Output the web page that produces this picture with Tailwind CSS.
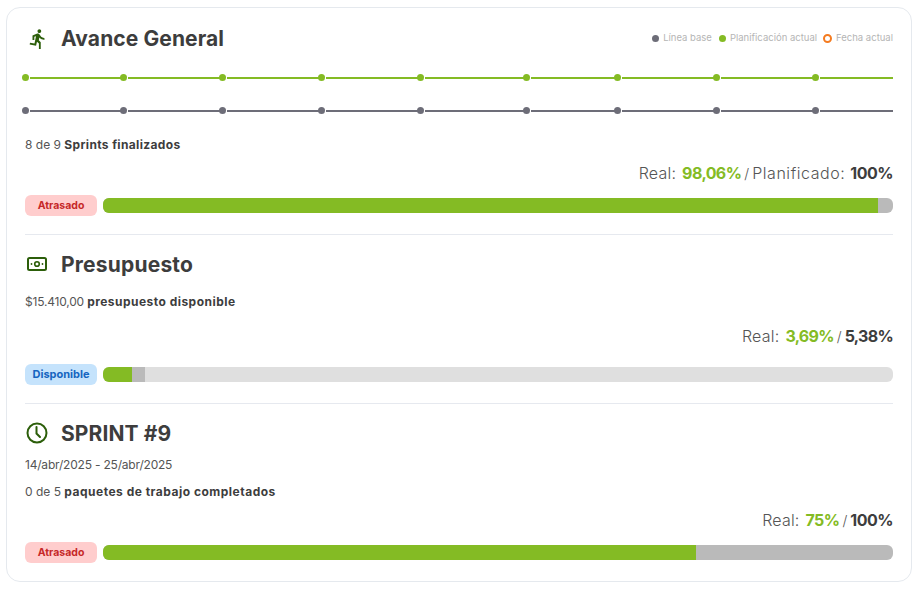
<!DOCTYPE html>
<html lang="es">
<head>
    <meta charset="UTF-8">
    <title>Avance General</title>
    <script src="https://cdn.jsdelivr.net/npm/@tailwindcss/browser@4"></script>
</head>
<body class="bg-white font-['Inter','Liberation_Sans',sans-serif] text-[#3d3d3d]">
<div class="pt-[7px] pl-[6px] pr-[4px]">
    <div class="w-[906px] h-[575px] border border-[#e5e9ee] rounded-[14px] px-[18px] bg-white">

        <!-- AVANCE GENERAL -->
        <div class="h-[60px] flex items-center justify-between pt-[1px]">
            <div class="flex items-center">
                <svg class="w-[22px] h-[22px] ml-[2px] text-[#2c5e0a]" viewBox="0 0 24 24" fill="currentColor"><path d="M13.49 5.48c1.1 0 2-.9 2-2s-.9-2-2-2-2 .9-2 2 .9 2 2 2zm-3.6 13.9l1-4.4 2.1 2v6h2v-7.5l-2.1-2 .6-3c1.3 1.5 3.3 2.5 5.5 2.5v-2c-1.9 0-3.5-1-4.3-2.4l-1-1.6c-.4-.6-1-1-1.7-1-.3 0-.5.1-.8.1l-5.2 2.2v4.7h2v-3.4l1.8-.7-1.6 8.1-4.9-1-.4 2 7 1.4z"/></svg>
                <h2 class="ml-[12px] text-[21px] font-bold leading-none tracking-[0.1px]">Avance General</h2>
            </div>
            <div class="flex items-center text-[9.5px] text-[#b5b5b5]">
                <span class="w-[7px] h-[7px] rounded-full bg-[#6d6d78] mr-[4px]"></span><span>Línea base</span>
                <span class="w-[7px] h-[7px] rounded-full bg-[#84bb24] ml-[7px] mr-[4px]"></span><span>Planificación actual</span>
                <span class="w-[9px] h-[9px] rounded-full border-2 border-[#f47b20] ml-[6px] mr-[4px]"></span><span>Fecha actual</span>
            </div>
        </div>

        <!-- TIMELINES -->
        <div class="mt-[5px] flex items-center h-[8px] text-[#84bb24]">
            <span class="w-[98px] flex items-center"><i class="w-[7px] h-[7px] rounded-full bg-current -ml-[3px] mr-[1px]"></i><i class="flex-1 h-[2px] mt-[2px] bg-current"></i></span>
            <span class="w-[99px] flex items-center"><i class="w-[7px] h-[7px] rounded-full bg-current -ml-[3px] mr-[1px]"></i><i class="flex-1 h-[2px] mt-[2px] bg-current"></i></span>
            <span class="w-[99px] flex items-center"><i class="w-[7px] h-[7px] rounded-full bg-current -ml-[3px] mr-[1px]"></i><i class="flex-1 h-[2px] mt-[2px] bg-current"></i></span>
            <span class="w-[99px] flex items-center"><i class="w-[7px] h-[7px] rounded-full bg-current -ml-[3px] mr-[1px]"></i><i class="flex-1 h-[2px] mt-[2px] bg-current"></i></span>
            <span class="w-[106px] flex items-center"><i class="w-[7px] h-[7px] rounded-full bg-current -ml-[3px] mr-[1px]"></i><i class="flex-1 h-[2px] mt-[2px] bg-current"></i></span>
            <span class="w-[91px] flex items-center"><i class="w-[7px] h-[7px] rounded-full bg-current -ml-[3px] mr-[1px]"></i><i class="flex-1 h-[2px] mt-[2px] bg-current"></i></span>
            <span class="w-[99px] flex items-center"><i class="w-[7px] h-[7px] rounded-full bg-current -ml-[3px] mr-[1px]"></i><i class="flex-1 h-[2px] mt-[2px] bg-current"></i></span>
            <span class="w-[99px] flex items-center"><i class="w-[7px] h-[7px] rounded-full bg-current -ml-[3px] mr-[1px]"></i><i class="flex-1 h-[2px] mt-[2px] bg-current"></i></span>
            <span class="flex-1 flex items-center"><i class="w-[7px] h-[7px] rounded-full bg-current -ml-[3px] mr-[1px]"></i><i class="flex-1 h-[2px] mt-[2px] bg-current"></i></span>
        </div>
        <div class="mt-[25px] flex items-center h-[8px] text-[#6d6d78]">
            <span class="w-[98px] flex items-center"><i class="w-[7px] h-[7px] rounded-full bg-current -ml-[3px] mr-[1px]"></i><i class="flex-1 h-[2px] mt-[2px] bg-current"></i></span>
            <span class="w-[99px] flex items-center"><i class="w-[7px] h-[7px] rounded-full bg-current -ml-[3px] mr-[1px]"></i><i class="flex-1 h-[2px] mt-[2px] bg-current"></i></span>
            <span class="w-[99px] flex items-center"><i class="w-[7px] h-[7px] rounded-full bg-current -ml-[3px] mr-[1px]"></i><i class="flex-1 h-[2px] mt-[2px] bg-current"></i></span>
            <span class="w-[99px] flex items-center"><i class="w-[7px] h-[7px] rounded-full bg-current -ml-[3px] mr-[1px]"></i><i class="flex-1 h-[2px] mt-[2px] bg-current"></i></span>
            <span class="w-[106px] flex items-center"><i class="w-[7px] h-[7px] rounded-full bg-current -ml-[3px] mr-[1px]"></i><i class="flex-1 h-[2px] mt-[2px] bg-current"></i></span>
            <span class="w-[91px] flex items-center"><i class="w-[7px] h-[7px] rounded-full bg-current -ml-[3px] mr-[1px]"></i><i class="flex-1 h-[2px] mt-[2px] bg-current"></i></span>
            <span class="w-[99px] flex items-center"><i class="w-[7px] h-[7px] rounded-full bg-current -ml-[3px] mr-[1px]"></i><i class="flex-1 h-[2px] mt-[2px] bg-current"></i></span>
            <span class="w-[99px] flex items-center"><i class="w-[7px] h-[7px] rounded-full bg-current -ml-[3px] mr-[1px]"></i><i class="flex-1 h-[2px] mt-[2px] bg-current"></i></span>
            <span class="flex-1 flex items-center"><i class="w-[7px] h-[7px] rounded-full bg-current -ml-[3px] mr-[1px]"></i><i class="flex-1 h-[2px] mt-[2px] bg-current"></i></span>
        </div>

        <p class="mt-[23px] h-[16px] leading-[16px] text-[12px] text-[#555]">8 de 9 <b class="font-bold text-[#3d3d3d] tracking-[0.35px]">Sprints finalizados</b></p>
        <div class="mt-[10px] h-[20px] leading-[20px] text-[16px] flex justify-end items-baseline text-[#555]">
            <span class="tracking-[0.2px] font-light">Real:</span>
            <b class="ml-[6px] font-bold text-[#84bb24] tracking-[-0.6px]">98,06%</b>
            <span class="mx-[3px] text-[14px] font-light">/</span>
            <span class="tracking-[0.55px] font-light">Planificado:</span>
            <b class="ml-[5px] font-bold text-[#3d3d3d] tracking-[-0.5px]">100%</b>
        </div>
        <div class="mt-[12px] flex items-center">
            <span class="w-[72px] h-[21px] rounded-[6px] bg-[#ffcdcd] text-[#c62828] text-[10.5px] font-bold flex items-center justify-center">Atrasado</span>
            <div class="ml-[6px] flex-1 h-[15px] rounded-[6px] bg-[#bababa] overflow-hidden"><div class="h-full bg-[#84bb24]" style="width:98.06%"></div></div>
        </div>
        <hr class="mt-[18px] border-[#e6e9ef]">

        <!-- PRESUPUESTO -->
        <div class="h-[58px] flex items-center">
            <svg class="w-[20px] h-[14px] ml-[2px] text-[#2c5e0a]" viewBox="0 0 20 14" fill="none" stroke="currentColor" stroke-width="2"><rect x="1" y="1" width="18" height="12" rx="1.5"/><circle cx="10" cy="7" r="2.3" stroke-width="1.6"/><circle cx="4.5" cy="7" r=".9" fill="currentColor" stroke="none"/><circle cx="15.5" cy="7" r=".9" fill="currentColor" stroke="none"/></svg>
            <h2 class="ml-[14px] text-[21px] font-bold leading-none tracking-[0.2px]">Presupuesto</h2>
        </div>
        <p class="mt-[1px] h-[16px] leading-[16px] text-[12px] text-[#555] tracking-[-0.2px]">$15.410,00 <b class="font-bold text-[#3d3d3d] tracking-[0.47px]">presupuesto disponible</b></p>
        <div class="mt-[16px] h-[20px] leading-[20px] text-[16px] flex justify-end items-baseline text-[#555]">
            <span class="tracking-[0.2px] font-light">Real:</span>
            <b class="ml-[6px] font-bold text-[#84bb24] tracking-[-0.7px]">3,69%</b>
            <span class="mx-[3px] text-[14px] font-light">/</span>
            <b class="font-bold text-[#3d3d3d] tracking-[-0.7px]">5,38%</b>
        </div>
        <div class="mt-[18px] flex items-center">
            <span class="w-[72px] h-[21px] rounded-[6px] bg-[#c5e3fc] text-[#1565c0] text-[11px] font-bold flex items-center justify-center">Disponible</span>
            <div class="ml-[6px] flex-1 h-[15px] rounded-[6px] bg-[#dfdfdf] overflow-hidden flex"><div class="h-full bg-[#84bb24]" style="width:3.69%"></div><div class="h-full bg-[#bababa]" style="width:1.69%"></div></div>
        </div>
        <hr class="mt-[18px] border-[#e6e9ef]">

        <!-- SPRINT -->
        <div class="h-[58px] flex items-center">
            <svg class="w-[24px] h-[24px] text-[#2c5e0a]" viewBox="0 0 24 24" fill="none" stroke="currentColor" stroke-width="2"><circle cx="12" cy="12" r="9.5"/><path d="M11.5 6v6.5l3.5 3.5" stroke-linecap="round"/></svg>
            <h2 class="ml-[12px] text-[21px] font-bold leading-none tracking-[0.1px]">SPRINT #9</h2>
        </div>
        <p class="h-[16px] leading-[16px] text-[12px] text-[#555] tracking-[-0.2px] -mt-[5px]">14/abr/2025 - 25/abr/2025</p>
        <p class="mt-[11px] h-[16px] leading-[16px] text-[12px] text-[#555]">0 de 5 <b class="font-bold text-[#3d3d3d] tracking-[0.5px]">paquetes de trabajo completados</b></p>
        <div class="mt-[10px] h-[20px] leading-[20px] text-[16px] flex justify-end items-baseline text-[#555]">
            <span class="tracking-[0.2px] font-light">Real:</span>
            <b class="ml-[6px] font-bold text-[#84bb24] tracking-[-0.6px]">75%</b>
            <span class="mx-[3px] text-[14px] font-light">/</span>
            <b class="font-bold text-[#3d3d3d] tracking-[-0.5px]">100%</b>
        </div>
        <div class="mt-[12px] flex items-center">
            <span class="w-[72px] h-[21px] rounded-[6px] bg-[#ffcdcd] text-[#c62828] text-[10.5px] font-bold flex items-center justify-center">Atrasado</span>
            <div class="ml-[6px] flex-1 h-[15px] rounded-[6px] bg-[#bababa] overflow-hidden"><div class="h-full bg-[#84bb24]" style="width:75%"></div></div>
        </div>
    </div>
</div>
</body>
</html>
